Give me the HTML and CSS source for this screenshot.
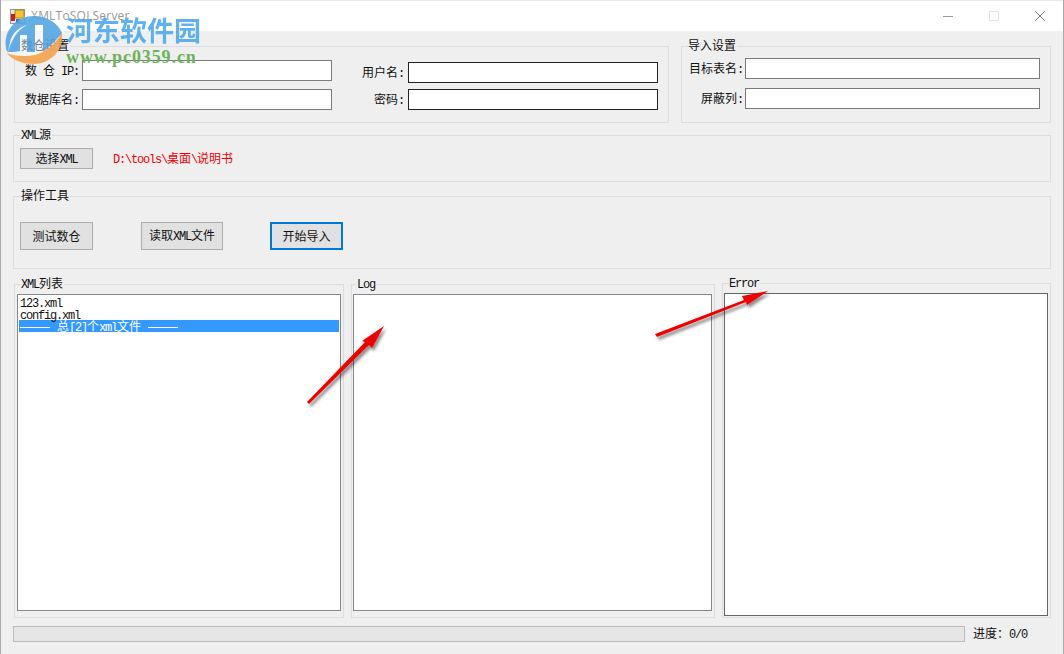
FILE: index.html
```html
<!DOCTYPE html>
<html lang="zh-CN">
<head>
    <meta charset="UTF-8">
    <title>XMLToSQLServer</title>
    <link rel="stylesheet" href="styles.css">
</head>
<body>
    <div class="window">
        <!-- Title bar -->
        <div class="titlebar">
            <svg class="app-icon" width="15" height="15" viewBox="0 0 15 15">
                <rect x="0.5" y="0.5" width="14" height="14" fill="#e8e8e8" stroke="#9a9a9a"/>
                <rect x="5" y="1" width="9" height="8" fill="#f4c430" stroke="#a88a20"/>
                <rect x="1" y="5" width="4" height="7" fill="#c8201c"/>
                <rect x="6" y="10" width="4" height="4" fill="#3a78c0"/>
            </svg>
            <span class="app-title">XMLToSQLServer</span>
            <div class="win-buttons">
                <svg class="win-btn" width="10" height="10" viewBox="0 0 10 10"><path d="M0 5.5H10" stroke="#9a9a9a"/></svg>
                <svg class="win-btn" width="10" height="10" viewBox="0 0 10 10"><rect x="0.5" y="0.5" width="9" height="9" fill="none" stroke="#e2e2e2"/></svg>
                <svg class="win-btn" width="10" height="10" viewBox="0 0 10 10"><path d="M0 0L10 10M10 0L0 10" stroke="#8a8a8a"/></svg>
            </div>
        </div>

        <div class="client">
            <!-- Connection settings -->
            <div class="row-top">
                <div class="group group-db">
                    <div class="group-title">数仓设置</div>
                    <div class="db-cols">
                        <div class="col col-ip">
                            <div class="field">
                                <label class="lbl-left">数<span class="en"> </span>仓<span class="en"> IP:</span></label>
                                <input class="txt" type="text">
                            </div>
                            <div class="field">
                                <label class="lbl-left">数据库名<span class="en">:</span></label>
                                <input class="txt" type="text">
                            </div>
                        </div>
                        <div class="col col-user">
                            <div class="field">
                                <label class="lbl-right">用户名<span class="en">:</span></label>
                                <input class="txt txt-dark" type="text">
                            </div>
                            <div class="field">
                                <label class="lbl-right">密码<span class="en">:</span></label>
                                <input class="txt txt-dark" type="text">
                            </div>
                        </div>
                    </div>
                </div>
                <div class="group group-import">
                    <div class="group-title">导入设置</div>
                    <div class="col col-import">
                        <div class="field">
                            <label class="lbl-import">目标表名<span class="en">:</span></label>
                            <input class="txt txt-wide" type="text">
                        </div>
                        <div class="field">
                            <label class="lbl-import">屏蔽列<span class="en">:</span></label>
                            <input class="txt txt-wide" type="text">
                        </div>
                    </div>
                </div>
            </div>

            <!-- XML source -->
            <div class="group group-source">
                <div class="group-title"><span class="en">XML</span>源</div>
                <div class="source-row">
                    <button class="btn btn-small">选择<span class="en">XML</span></button>
                    <span class="path"><span class="en">D:\tools\</span>桌面<span class="en">\</span>说明书</span>
                </div>
            </div>

            <!-- Tools -->
            <div class="group group-tools">
                <div class="group-title">操作工具</div>
                <div class="tools-row">
                    <button class="btn btn-test">测试数仓</button>
                    <button class="btn btn-read">读取<span class="en">XML</span>文件</button>
                    <button class="btn btn-start">开始导入</button>
                </div>
            </div>

            <!-- Lists -->
            <div class="row-lists">
                <div class="group group-list">
                    <div class="group-title"><span class="en">XML</span>列表</div>
                    <div class="listbox list-files">
                        <div class="item"><span class="en">123.xml</span></div>
                        <div class="item"><span class="en">config.xml</span></div>
                        <div class="item selected"><i class="dash"></i>总<span class="en">[2]</span>个<span class="en">xml</span>文件<i class="dash"></i></div>
                    </div>
                </div>
                <div class="group group-log">
                    <div class="group-title"><span class="en">Log</span></div>
                    <div class="listbox list-log"></div>
                </div>
                <div class="group group-error">
                    <div class="group-title"><span class="en">Error</span></div>
                    <div class="listbox list-error"></div>
                </div>
            </div>

            <!-- Progress -->
            <div class="row-progress">
                <div class="progress"></div>
                <span class="progress-text">进度：<span class="en">0/0</span></span>
            </div>
        </div>

        <!-- Red arrows drawn on the screenshot -->
        <svg class="arrows" width="1064" height="654" viewBox="0 0 1064 654">
            <defs>
                <filter id="arrow-shadow" x="-20%" y="-20%" width="150%" height="150%">
                    <feDropShadow dx="2" dy="3" stdDeviation="1.5" flood-color="#000" flood-opacity="0.45"/>
                </filter>
            </defs>
            <path filter="url(#arrow-shadow)" fill="#f00000" d="M307 402L365 342L362 341L384 326L372 348L369 345L309 404Z"/>
            <path filter="url(#arrow-shadow)" fill="#f00000" d="M655 334L744 300L742 296L768 291L747 305L746 302L657 337Z"/>
        </svg>

        <!-- Site watermark -->
        <div class="watermark">
            <svg class="wm-logo" width="58" height="50" viewBox="0 0 58 50">
                <circle cx="29" cy="25" r="25" fill="#fff" opacity="0.45"/>
                <path d="M1 33C-2 16 11 1 29 1C42 1 53 8 57 18C50 27 44 32 38 37L38 10L30 10L30 37L22 37L22 20L15 20L15 36C11 37 6 37 3 37C2 36 1 35 1 33Z" fill="#3f9ae0" opacity="0.8"/>
                <path d="M3 37C6 26 12 15 22 10C13 12 6 20 5 28C4 32 3 35 3 37Z" fill="#fff" opacity="0.9"/>
                <path d="M2 38C8 41 20 42 30 40C41 37 50 29 57 18C59 34 46 49 29 49C16 49 6 44 2 38Z" fill="#f4a24a" opacity="0.9"/>
            </svg>
            <div class="wm-text">
                <div class="wm-name">河东软件园</div>
                <div class="wm-url">www.pc0359.cn</div>
            </div>
        </div>
    </div>
</body>
</html>
```

FILE: styles.css
```css
* {
    box-sizing: border-box;
}

html, body {
    margin: 0;
    padding: 0;
    overflow: hidden;
}

body {
    font-family: "Noto Sans CJK SC", "Liberation Mono", monospace;
    font-size: 12px;
    line-height: 12px;
    color: #111;
}

.window {
    position: relative;
    width: 1064px;
    height: 654px;
    background-color: #efefef;
    border-left: 1px solid #a8a8a8;
    border-right: 1px solid #a8a8a8;
    overflow: hidden;
}

.en {
    font-family: "Liberation Mono", monospace;
    font-size: 12px;
    letter-spacing: -1.2px;
    white-space: pre;
}

/* Title bar */
.titlebar {
    display: flex;
    align-items: center;
    height: 31px;
    padding-left: 9px;
    background-color: #fff;
    border-top: 1px solid #e8e8e8;
}

.app-icon {
    flex: none;
}

.app-title {
    margin-left: 6px;
    font-family: "Open Sans", sans-serif;
    font-size: 12px;
    letter-spacing: 0.2px;
    color: #9a9a9a;
}

.win-buttons {
    display: flex;
    gap: 36px;
    margin-left: auto;
    margin-right: 18px;
}

/* Group boxes */
.client {
    padding: 15px 0 0 12px;
}

.group {
    border: 1px solid #dcdcdc;
}

.group-title {
    width: fit-content;
    height: 14px;
    margin: -8px 0 0 6px;
    padding: 0 1px 0 0;
    background-color: #efefef;
}

.row-top {
    display: flex;
    gap: 12px;
    margin-left: 1px;
}

.group-db {
    width: 655px;
    height: 77px;
}

.db-cols {
    display: flex;
    gap: 28px;
    padding-left: 10px;
}

.col {
    display: flex;
    flex-direction: column;
}

.col-ip {
    gap: 8px;
    margin-top: 7px;
}

.col-user {
    gap: 6px;
    margin-top: 9px;
}

.field {
    display: flex;
    align-items: center;
}

label {
    flex: none;
    white-space: nowrap;
}

.lbl-left {
    width: 57px;
}

.lbl-right {
    width: 48px;
    padding-right: 4px;
    text-align: right;
}

.txt {
    display: block;
    width: 250px;
    height: 21px;
    margin: 0;
    padding: 0;
    background-color: #fff;
    border: 1px solid #7a7a7a;
    border-radius: 0;
}

.txt-dark {
    border-color: #222;
}

.group-import {
    width: 370px;
    height: 77px;
}

.col-import {
    gap: 9px;
    margin-top: 5px;
    padding-left: 5px;
}

.lbl-import {
    width: 58px;
    padding-right: 2px;
    text-align: right;
}

.txt-wide {
    width: 295px;
}

.group-source {
    width: 1038px;
    height: 47px;
    margin-top: 12px;
}

.group-source .group-title,
.group-tools .group-title {
    margin-left: 7px;
}

.source-row {
    display: flex;
    align-items: center;
    padding: 6px 0 0 6px;
}

.btn {
    height: 21px;
    margin: 0;
    padding: 0;
    font: inherit;
    color: #111;
    background-color: #e1e1e1;
    border: 1px solid #adadad;
    border-radius: 0;
}

.btn-small {
    width: 73px;
}

.path {
    margin-left: 20px;
    color: #f00000;
}

.group-tools {
    width: 1038px;
    height: 73px;
    margin-top: 14px;
}

.tools-row {
    display: flex;
    padding: 19px 0 0 6px;
}

.tools-row .btn {
    height: 28px;
}

.btn-test {
    width: 73px;
}

.btn-read {
    width: 82px;
    margin-left: 48px;
}

.btn-start {
    width: 73px;
    margin-left: 47px;
    border: 2px solid #0078d7;
}

/* Lists */
.row-lists {
    display: flex;
    gap: 7px;
    margin: 15px 0 0 1px;
}

.group-list {
    width: 330px;
    height: 334px;
}

.group-log {
    width: 364px;
    height: 334px;
}

.group-log .group-title {
    margin-left: 5px;
}

.group-error {
    width: 329px;
    height: 335px;
    margin-top: -1px;
}

.listbox {
    background-color: #fff;
    border: 1px solid #828790;
}

.list-files {
    width: 324px;
    height: 317px;
    margin: 3px 0 0 2px;
    padding: 1px;
}

.list-log {
    width: 359px;
    height: 317px;
    margin: 3px 0 0 1px;
}

.list-error {
    width: 324px;
    height: 323px;
    margin: 3px 0 0 1px;
    border-color: #646464;
}

.item {
    height: 12px;
    padding-left: 1px;
    white-space: nowrap;
}

.selected {
    color: #fff;
    background-color: #3399ff;
}

.dash {
    display: inline-block;
    width: 30px;
    margin: 0 7px;
    vertical-align: middle;
    border-top: 1px solid #fff;
}

.dash:first-child {
    margin-left: 0;
}

/* Progress */
.row-progress {
    display: flex;
    align-items: center;
    margin-top: 8px;
}

.progress {
    width: 952px;
    height: 16px;
    background-color: #e6e6e6;
    border: 1px solid #bcbcbc;
}

.progress-text {
    margin-left: 8px;
    white-space: nowrap;
}

/* Overlays */
.arrows {
    position: absolute;
    left: -1px;
    top: 0;
    pointer-events: none;
}

.watermark {
    position: absolute;
    left: 4px;
    top: 15px;
    display: flex;
    pointer-events: none;
}

.wm-text {
    margin: 1px 0 0 3px;
}

.wm-name {
    font-family: "Noto Sans CJK SC", sans-serif;
    font-size: 27px;
    font-weight: 700;
    line-height: 27px;
    color: #4fa9ee;
    opacity: 0.9;
}

.wm-url {
    margin-top: 7px;
    font-family: "Liberation Serif", serif;
    font-size: 18px;
    font-weight: 700;
    line-height: 14px;
    letter-spacing: 0.9px;
    white-space: nowrap;
    color: #6db35a;
}
```
